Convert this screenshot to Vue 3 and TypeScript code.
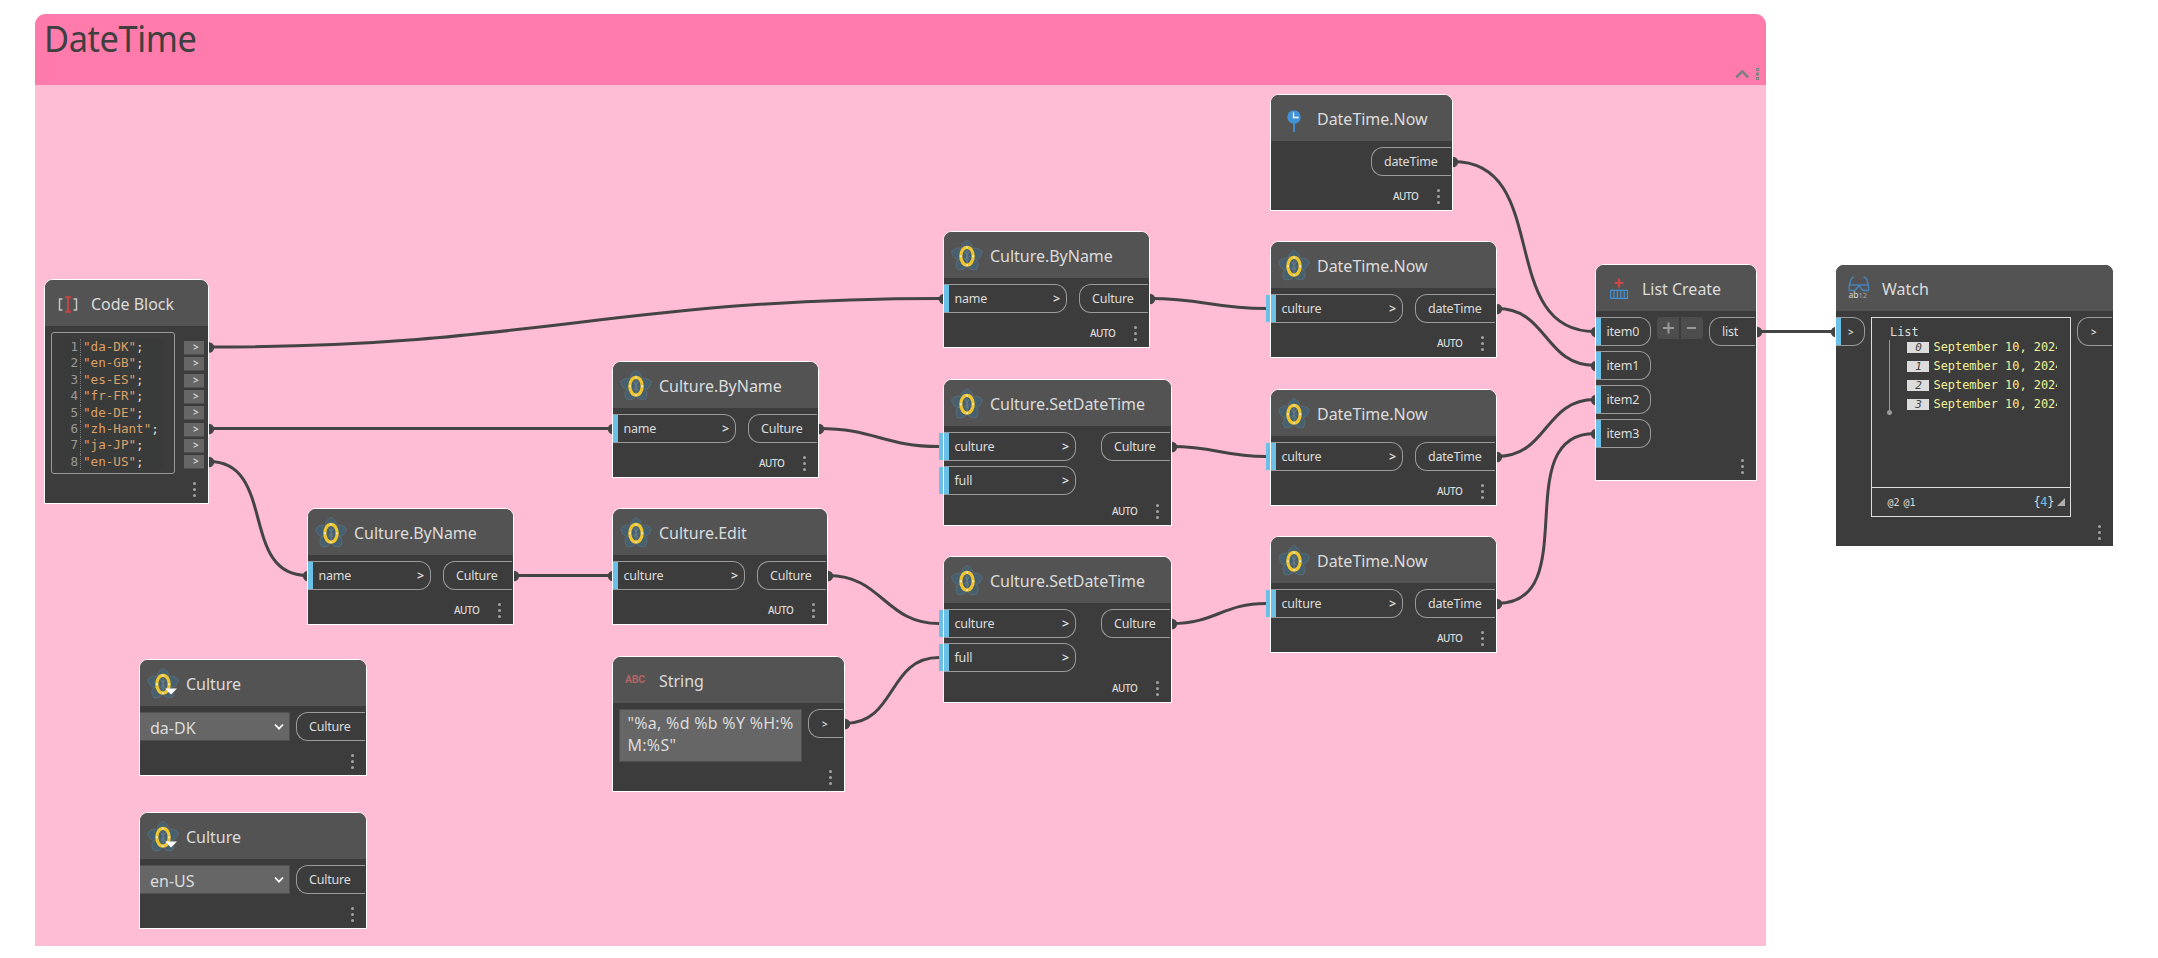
<script setup lang="ts">
type Icon = 'flower' | 'flowerDrop' | 'code' | 'abc' | 'clock' | 'list' | 'watch'

interface GraphNode {
  id: string
  kind: 'plain' | 'code' | 'string' | 'select' | 'create' | 'watch'
  title: string
  icon: Icon
  x: number
  y: number
  w: number
  h: number
  inputs: string[]
  inW: number
  output: string
  outW: number
  auto?: boolean
  outer?: boolean
  value?: string
}

const nodes: GraphNode[] = [
  { id: 'code', kind: 'code', title: 'Code Block', icon: 'code', x: 44, y: 279, w: 165, h: 225, inputs: [], inW: 0, output: '', outW: 0 },
  { id: 'by1', kind: 'plain', title: 'Culture.ByName', icon: 'flower', x: 307, y: 508, w: 207, h: 117, inputs: ['name'], inW: 123, output: 'Culture', outW: 69, auto: true },
  { id: 'by2', kind: 'plain', title: 'Culture.ByName', icon: 'flower', x: 612, y: 361, w: 207, h: 117, inputs: ['name'], inW: 123, output: 'Culture', outW: 69, auto: true },
  { id: 'edit', kind: 'plain', title: 'Culture.Edit', icon: 'flower', x: 612, y: 508, w: 216, h: 117, inputs: ['culture'], inW: 132, output: 'Culture', outW: 69, auto: true },
  { id: 'string', kind: 'string', title: 'String', icon: 'abc', x: 612, y: 656, w: 233, h: 136, inputs: [], inW: 0, output: '>', outW: 35 },
  { id: 'by3', kind: 'plain', title: 'Culture.ByName', icon: 'flower', x: 943, y: 231, w: 207, h: 117, inputs: ['name'], inW: 123, output: 'Culture', outW: 69, auto: true },
  { id: 'set1', kind: 'plain', title: 'Culture.SetDateTime', icon: 'flower', x: 943, y: 379, w: 229, h: 147, inputs: ['culture', 'full'], inW: 132, output: 'Culture', outW: 69, auto: true, outer: true },
  { id: 'set2', kind: 'plain', title: 'Culture.SetDateTime', icon: 'flower', x: 943, y: 556, w: 229, h: 147, inputs: ['culture', 'full'], inW: 132, output: 'Culture', outW: 69, auto: true, outer: true },
  { id: 'now0', kind: 'plain', title: 'DateTime.Now', icon: 'clock', x: 1270, y: 94, w: 183, h: 117, inputs: [], inW: 0, output: 'dateTime', outW: 80, auto: true },
  { id: 'now1', kind: 'plain', title: 'DateTime.Now', icon: 'flower', x: 1270, y: 241, w: 227, h: 117, inputs: ['culture'], inW: 132, output: 'dateTime', outW: 80, auto: true, outer: true },
  { id: 'now2', kind: 'plain', title: 'DateTime.Now', icon: 'flower', x: 1270, y: 389, w: 227, h: 117, inputs: ['culture'], inW: 132, output: 'dateTime', outW: 80, auto: true, outer: true },
  { id: 'now3', kind: 'plain', title: 'DateTime.Now', icon: 'flower', x: 1270, y: 536, w: 227, h: 117, inputs: ['culture'], inW: 132, output: 'dateTime', outW: 80, auto: true, outer: true },
  { id: 'create', kind: 'create', title: 'List Create', icon: 'list', x: 1595, y: 264, w: 162, h: 217, inputs: ['item0', 'item1', 'item2', 'item3'], inW: 55, output: 'list', outW: 46 },
  { id: 'watch', kind: 'watch', title: 'Watch', icon: 'watch', x: 1835, y: 264, w: 279, h: 283, inputs: ['>'], inW: 29, output: '>', outW: 35 },
  { id: 'sel1', kind: 'select', title: 'Culture', icon: 'flowerDrop', x: 139, y: 659, w: 228, h: 117, inputs: [], inW: 0, output: 'Culture', outW: 69, value: 'da-DK' },
  { id: 'sel2', kind: 'select', title: 'Culture', icon: 'flowerDrop', x: 139, y: 812, w: 228, h: 117, inputs: [], inW: 0, output: 'Culture', outW: 69, value: 'en-US' },
]

interface Wire { x1: number; y1: number; x2: number; y2: number; flat?: boolean }

const wires: Wire[] = [
  { x1: 209, y1: 347, x2: 943, y2: 298.5 },
  { x1: 209, y1: 428.5, x2: 612, y2: 428.5 },
  { x1: 209, y1: 461.5, x2: 307, y2: 575.5 },
  { x1: 514, y1: 575.5, x2: 612, y2: 575.5 },
  { x1: 819, y1: 428.5, x2: 939, y2: 446.5, flat: true },
  { x1: 828, y1: 575.5, x2: 939, y2: 623.5, flat: true },
  { x1: 845, y1: 723.5, x2: 939, y2: 657.5, flat: true },
  { x1: 1150, y1: 298.5, x2: 1266, y2: 308.5, flat: true },
  { x1: 1172, y1: 446.5, x2: 1266, y2: 456.5, flat: true },
  { x1: 1172, y1: 623.5, x2: 1266, y2: 603.5, flat: true },
  { x1: 1453, y1: 161.5, x2: 1595, y2: 331.5 },
  { x1: 1497, y1: 308.5, x2: 1595, y2: 365.5 },
  { x1: 1497, y1: 456.5, x2: 1595, y2: 399.5 },
  { x1: 1497, y1: 603.5, x2: 1595, y2: 433.5 },
  { x1: 1757, y1: 331.5, x2: 1835, y2: 331.5 },
]

function wirePath(w: Wire): string {
  const reach = 0.45 * Math.hypot(w.x2 - w.x1, w.y2 - w.y1)
  return `M${w.x1} ${w.y1}C${w.x1 + reach} ${w.y1} ${w.x2 - reach} ${w.y2} ${w.x2} ${w.y2}`
}

const codeLines = ['da-DK', 'en-GB', 'es-ES', 'fr-FR', 'de-DE', 'zh-Hant', 'ja-JP', 'en-US']
const petals = [0, 72, 144, 216, 288]
</script>

<template>
  <main class="canvas">
    <section class="group">
      <header class="group-head">
        <h1>DateTime</h1>
        <svg class="group-tools" width="26" height="14" viewBox="0 0 26 14">
          <path d="M1.2 10.5 7.2 4.3l6 6.2" fill="none" stroke="#808080" stroke-width="2.6" />
          <g fill="none" stroke="#808080" stroke-width="1"><rect x="21.5" y="1.5" width="2" height="2" /><rect x="21.5" y="6" width="2" height="2" /><rect x="21.5" y="10.5" width="2" height="2" /></g>
        </svg>
      </header>
    </section>

    <svg class="wires" width="2158" height="958" viewBox="0 0 2158 958">
      <g v-for="(w, i) in wires" :key="i">
        <path :d="wirePath(w)" fill="none" stroke="#444" stroke-width="3" />
        <circle :cx="w.x1" :cy="w.y1 + 0.5" r="5.2" fill="#444" />
        <circle v-if="!w.flat" :cx="w.x2 + 1" :cy="w.y2 + 0.5" r="5.2" fill="#444" />
      </g>
    </svg>

    <article
      v-for="n in nodes"
      :key="n.id"
      class="node"
      :style="{ left: n.x + 'px', top: n.y + 'px', width: n.w + 'px', height: n.h + 'px' }"
    >
      <header class="head">
        <svg v-if="n.icon === 'flower' || n.icon === 'flowerDrop'" class="icon" width="34" height="34" viewBox="0 0 34 34">
          <g fill="#47606f" stroke="#63747e" stroke-width="0.6">
            <path v-for="a in petals" :key="a" :transform="`rotate(${a} 17 18.5)`" d="M17 18.5C11.5 14.5 10 9 12.5 6Q14.3 3.6 17 2.4Q19.7 3.6 21.5 6C24 9 22.5 14.5 17 18.5Z" />
          </g>
          <path d="M17 12v13M15 14l2 3 2-3M15 22l2-3 2 3" stroke="#6d8290" stroke-width="0.8" fill="none" />
          <ellipse cx="17" cy="18.2" rx="6.2" ry="8.9" fill="none" stroke="#f0c52e" stroke-width="3.2" />
          <g fill="#e8e6da"><circle cx="17" cy="9.6" r="1" /><circle cx="17" cy="27" r="1" /><circle cx="11" cy="18.2" r="1" /><circle cx="23" cy="18.2" r="1" /></g>
          <path v-if="n.icon === 'flowerDrop'" d="M19 22.500h12l-6 6z" fill="#fff" />
        </svg>
        <svg v-else-if="n.icon === 'code'" class="icon" width="34" height="34" viewBox="0 0 34 34">
          <path d="M11.5 13H8.500v11h3M22.500 13h3v11h-3" fill="none" stroke="#c4c4c4" stroke-width="1.500" />
          <path d="M14 11.200h6M14 25.800h6M17 11v15" fill="none" stroke="#c74444" stroke-width="1.900" />
        </svg>
        <span v-else-if="n.icon === 'abc'" class="icon abc">ABC</span>
        <svg v-else-if="n.icon === 'clock'" class="icon" width="34" height="34" viewBox="0 0 34 34">
          <path d="M17 13v18" stroke="#4292d8" stroke-width="1.800" />
          <circle cx="17" cy="16" r="6.700" fill="#4292d8" />
          <path d="M16.500 11.500v5h5" fill="none" stroke="#fff" stroke-width="1.300" />
        </svg>
        <svg v-else-if="n.icon === 'list'" class="icon" width="34" height="34" viewBox="0 0 34 34">
          <path d="M17 7.500v9M12.500 12h9" stroke="#cf4747" stroke-width="2.200" />
          <path d="M8.700 19.300h16.800v8H8.700zM12 19.500v8M15.400 19.500v8M18.800 19.500v8M22.200 19.500v8" fill="none" stroke="#4292d8" stroke-width="1.200" />
        </svg>
        <svg v-else class="icon" width="34" height="34" viewBox="0 0 34 34">
          <path d="M12.200 6.300Q9 6.500 8.600 10L7.300 14.500V19.500H13L17 14.500L21 19.500H26.500V14.500L25.200 10Q24.800 6.500 21.600 6.300M7.300 14h19.200" fill="none" stroke="#4583b8" stroke-width="1.400" />
          <text x="6.500" y="27" class="watch-text">ab<tspan class="watch-num">12</tspan></text>
        </svg>
        <span class="title">{{ n.title }}</span>
      </header>

      <div class="body">
        <div v-if="n.kind === 'code'" class="code-row">
          <ol class="editor">
            <li v-for="(line, i) in codeLines" :key="line"><span class="num">{{ i + 1 }}</span><span class="src"><span class="str">"{{ line }}"</span>;</span></li>
          </ol>
          <div class="code-outs">
            <span v-for="line in codeLines" :key="line" class="code-out"><b>&gt;</b></span>
          </div>
        </div>

        <div v-if="n.inputs.length" class="inputs">
          <div v-for="p in n.inputs" :key="p" class="port in" :class="{ outer: n.outer, bare: p === '>' }" :style="{ width: n.inW + 'px' }">
            <span>{{ p }}</span>
            <span v-if="n.kind === 'plain'" class="level">&gt;</span>
          </div>
        </div>

        <div v-if="n.kind === 'create'" class="buttons">
          <span><svg width="22" height="22" viewBox="0 0 22 22"><path d="M6 11h11M11.500 5.500v11" stroke="#999" stroke-width="2" /></svg></span>
          <span><svg width="22" height="22" viewBox="0 0 22 22"><path d="M6 11h9" stroke="#999" stroke-width="2" /></svg></span>
        </div>

        <div v-if="n.kind === 'string'" class="text-input">"%a, %d %b %Y %H:%<br>M:%S"</div>

        <div v-if="n.kind === 'select'" class="dropdown">
          <span>{{ n.value }}</span>
          <svg width="10" height="8" viewBox="0 0 10 8"><path d="M1 1.500 5 5.700 9 1.500" fill="none" stroke="#fff" stroke-width="1.700" /></svg>
        </div>

        <div v-if="n.kind === 'watch'" class="viewer">
          <div class="tree">
            <div class="root">List</div>
            <div class="branch">
              <div v-for="i in 4" :key="i" class="item"><i>{{ i - 1 }}</i><span>September 10, 2024</span></div>
            </div>
          </div>
          <footer class="summary">
            <span class="levels"><span>@2</span><span>@1</span></span>
            <span class="count">{<em>4</em>}</span>
            <svg width="8" height="8" viewBox="0 0 8 8"><path d="M8 0v8H0z" fill="#b0b0b0" /></svg>
          </footer>
        </div>

        <div v-if="n.output" class="port out" :class="{ bare: n.output === '>' }" :style="{ width: n.outW + 'px' }">
          <span>{{ n.output }}</span>
        </div>
      </div>

      <footer class="foot">
        <span v-if="n.auto" class="auto">AUTO</span>
        <span class="dots"><i /><i /><i /></span>
      </footer>
    </article>
  </main>
</template>

<style>
html,
body {
  margin: 0;
  background: #fff;
  overflow: hidden;
}
</style>

<style scoped>
* {
  box-sizing: border-box;
}
.canvas {
  position: relative;
  width: 2158px;
  height: 958px;
  overflow: hidden;
  font-family: 'Noto Sans', 'Open Sans', sans-serif;
  color: #dcdcdc;
}
.group {
  position: absolute;
  left: 35px;
  top: 14px;
  width: 1731px;
  height: 932px;
  background: #ffbcd5;
  border-radius: 11px 11px 0 0;
}
.group-head {
  position: relative;
  height: 71px;
  padding-left: 8px;
  background: #ff7bac;
  border-radius: 11px 11px 0 0;
}
.group-head h1 {
  margin: 0;
  font-size: 36px;
  font-weight: 400;
  line-height: 49px;
  letter-spacing: -0.4px;
  color: #3f3f3f;
  transform: scaleX(0.955);
  transform-origin: 0 0;
  padding-left: 1px;
}
.group-tools {
  position: absolute;
  right: 5px;
  top: 53px;
}
.wires {
  position: absolute;
  left: 0;
  top: 0;
}
.node {
  position: absolute;
  display: flex;
  flex-direction: column;
  border: 1px solid #fff;
  border-radius: 9px 9px 0 0;
  background: #3c3c3c;
}
.head {
  flex: none;
  display: flex;
  align-items: center;
  height: 46px;
  border-radius: 8px 8px 0 0;
  background: #535353;
}
.icon {
  flex: none;
  width: 34px;
  height: 34px;
  margin: 0 6px 0 6px;
}
.abc {
  font: 700 10.5px/34px Roboto, sans-serif;
  color: #b56464;
  padding-left: 6px;
  letter-spacing: -0.2px;
}
.title {
  font-size: 16px;
  line-height: 22px;
  letter-spacing: -0.02px;
  padding-top: 2px;
}
.watch-text {
  font: 8.5px 'Noto Sans', sans-serif;
  fill: #ddd;
}
.watch-num {
  fill: #aaa;
  font-size: 7.5px;
}
.body {
  display: flex;
  align-items: flex-start;
  padding-top: 6px;
}
.inputs {
  display: flex;
  flex-direction: column;
  gap: 5px;
}
.port {
  position: relative;
  display: flex;
  align-items: center;
  height: 29px;
  border: 1px solid #9a9a9a;
  font-size: 12.5px;
  letter-spacing: -0.2px;
  white-space: nowrap;
}
.in {
  justify-content: space-between;
  border-left: 0;
  border-radius: 0 12px 12px 0;
  padding: 0 6px 0 10.5px;
}
.in::before {
  content: '';
  position: absolute;
  left: 0;
  top: 0;
  width: 5px;
  height: 27px;
  background: #6ac0e7;
}
.in.outer::after {
  content: '';
  position: absolute;
  left: -5px;
  top: 0;
  width: 4px;
  height: 27px;
  background: #6ac0e7;
}
.level {
  font-weight: 600;
}
.out {
  margin-left: auto;
  margin-right: 1px;
  border-right: 0;
  border-radius: 12px 0 0 12px;
  padding-left: 12px;
}
.in.bare {
  padding-left: 12px;
  font-size: 10px;
  font-weight: 600;
}
.out.bare {
  padding-left: 13px;
  font-size: 10px;
  font-weight: 600;
}
.foot {
  margin-top: auto;
  display: flex;
  justify-content: flex-end;
  align-items: center;
  height: 28px;
  padding-right: 12.5px;
}
.auto {
  font-size: 10px;
  font-weight: 500;
  letter-spacing: -0.4px;
  margin-right: 18px;
}
.dots {
  display: flex;
  flex-direction: column;
  gap: 3px;
}
.dots i {
  width: 3px;
  height: 3px;
  border-radius: 50%;
  background: #a3a3a3;
}

.code-row {
  display: flex;
  padding-left: 6px;
}
.editor {
  width: 124px;
  height: 142px;
  margin: 0;
  padding: 6px 0 0 11px;
  list-style: none;
  border: 1px solid #999;
  border-radius: 3px;
  font: 12.6px/16.4px 'DejaVu Sans Mono', monospace;
}
.editor li {
  display: flex;
  height: 16.4px;
  width: 101px;
  background: #393b3a;
}
.num {
  width: 18px;
  padding-right: 2px;
  text-align: right;
  color: #999;
  border-right: 1px dotted #777;
}
.src {
  padding-left: 2px;
  white-space: pre;
}
.str {
  color: #dca068;
}
.code-outs {
  display: flex;
  flex-direction: column;
  gap: 2.35px;
  padding: 9px 0 0 9px;
}
.code-out {
  width: 20px;
  height: 14px;
  padding-left: 9px;
  background: #666;
  border-bottom: 1px solid #505050;
  font-size: 10px;
  line-height: 13px;
}
.code-out b {
  font-weight: 600;
}

.text-input {
  width: 183px;
  height: 53px;
  margin-left: 6px;
  padding: 2px 0 0 7.5px;
  background: #666;
  border: 1px solid #505050;
  font-size: 16px;
  line-height: 22.3px;
  letter-spacing: 0.27px;
  white-space: nowrap;
}
.dropdown {
  display: flex;
  align-items: center;
  justify-content: space-between;
  width: 150px;
  height: 29px;
  padding: 0 5px 0 10px;
  background: #666;
  border: 1px solid #505050;
  border-left: 0;
  font-size: 16px;
}
.dropdown span {
  padding-top: 2px;
}
.buttons {
  display: flex;
  gap: 2px;
  margin-left: 6px;
}
.buttons span {
  width: 22px;
  height: 22px;
  background: #4d4d4d;
  border-radius: 4px 0 0 4px;
}
.buttons span + span {
  border-radius: 0 4px 4px 0;
}

.viewer {
  display: flex;
  flex-direction: column;
  width: 200px;
  height: 200px;
  margin-left: 6px;
  border: 1px solid #ddd;
  font-family: 'DejaVu Sans Mono', monospace;
  font-size: 11.9px;
}
.tree {
  flex: 1;
  padding: 6px 13px 0 17px;
}
.root {
  line-height: 16px;
  padding-left: 1px;
}
.branch {
  position: relative;
  height: 74px;
  padding-left: 17px;
  border-left: 1px solid #999;
}
.branch::after {
  content: '';
  position: absolute;
  left: -3px;
  bottom: -1px;
  width: 5px;
  height: 5px;
  border-radius: 50%;
  background: #999;
}
.item {
  display: flex;
  align-items: center;
  height: 19px;
  position: relative;
  top: -2.5px;
  color: #f0f09a;
  white-space: nowrap;
}
.item i {
  flex: none;
  width: 22px;
  height: 11px;
  margin-right: 4.5px;
  padding-left: 1px;
  background: #dcdcdc;
  color: #444;
  text-align: center;
  font-size: 11px;
  line-height: 11px;
}
.item span {
  width: 124px;
  overflow: hidden;
}
.summary {
  display: flex;
  align-items: center;
  height: 29px;
  border-top: 1px solid #ddd;
  padding: 0 5px 0 15.5px;
}
.levels {
  display: flex;
  gap: 4px;
  font-size: 10px;
}
.count {
  margin-left: auto;
  margin-right: 3px;
  letter-spacing: -0.3px;
}
.count em {
  font-style: normal;
  color: #6ac0e7;
}
</style>
